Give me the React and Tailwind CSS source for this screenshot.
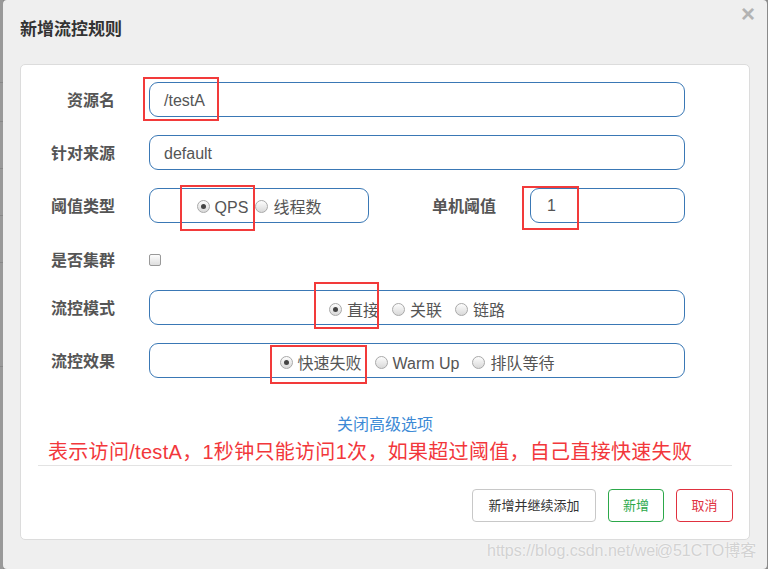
import React from "react";

const font = { fontFamily: '"Liberation Sans", "Noto Sans CJK SC", sans-serif' };

function Radio({ checked, label }) {
  return (
    <label className="flex items-center gap-[5px]">
      <span className="flex h-[13px] w-[13px] items-center justify-center rounded-full border border-[#a9a9a9] bg-gradient-to-b from-[#fdfdfd] to-[#d9d9d9]">
        {checked && <span className="h-[5px] w-[5px] rounded-full bg-[#444]" />}
      </span>
      <span className="pt-[3px] text-[16px] text-[#555]">{label}</span>
    </label>
  );
}

function Label({ children, w = "w-[94px]" }) {
  return <div className={`${w} shrink-0 pt-[3px] text-right text-[16px] font-bold text-[#555]`}>{children}</div>;
}

const box = "h-[35px] rounded-[9px] border border-[#3a78b5] bg-white";

export default function App() {
  return (
    <div className="relative flex h-[569px] w-[768px] overflow-hidden bg-[#8a8a8a]" style={font}>
      {/* backdrop strip on the left */}
      <div className="flex w-[3px] shrink-0 flex-col bg-[#999]">
        <div className="h-[83px] border-b border-[#888]" />
        <div className="h-[39px] border-b border-[#888]" />
        <div className="h-[47px] border-b border-[#888]" />
        <div className="h-[47px] border-b border-[#888]" />
        <div className="h-[47px] border-b border-[#888]" />
        <div className="h-[104px] border-b border-[#888]" />
      </div>

      {/* modal */}
      <div className="flex w-[764px] flex-col rounded-[4px] bg-[#efefef]">
        <div className="flex h-[64px] items-start justify-between pl-[17px] pr-[12px]">
          <h3 className="pt-[17px] text-[17px] font-bold text-[#333]">新增流控规则</h3>
          <span className="pt-[2px] text-[24px] font-bold leading-none text-[#b3b3b3]">×</span>
        </div>

        <div className="ml-[17px] w-[730px] rounded-[5px] border border-[#dcdcdc] bg-white">
          <div className="flex flex-col gap-[18px] pr-[64px] pt-[17px]">
            <div className="flex items-center gap-[34px]">
              <Label>资源名</Label>
              <div className={`${box} flex flex-1 items-center px-[14px] pt-[3px] text-[16px] text-[#555]`}>/testA</div>
            </div>
            <div className="flex items-center gap-[34px]">
              <Label>针对来源</Label>
              <div className={`${box} flex flex-1 items-center px-[14px] pt-[2px] text-[16px] text-[#555]`}>default</div>
            </div>
            <div className="flex items-center">
              <Label>阈值类型</Label>
              <div className={`${box} ml-[34px] flex w-[220px] items-center justify-center gap-[7px] pt-[2px]`}>
                <Radio checked label="QPS" />
                <Radio label="线程数" />
              </div>
              <Label w="w-[127px]">单机阈值</Label>
              <div className={`${box} ml-[34px] flex flex-1 items-center px-[16px] text-[16px] text-[#555]`}>1</div>
            </div>
            <div className="flex h-[31px] items-center gap-[34px] pt-[6px]">
              <Label>是否集群</Label>
              <span className="h-[12px] w-[12px] rounded-[2px] border border-[#999] bg-gradient-to-b from-[#fdfdfd] to-[#dedede]" />
            </div>
            <div className="flex items-center gap-[34px]">
              <Label>流控模式</Label>
              <div className={`${box} flex flex-1 items-center justify-center gap-[13px] pt-[4px]`}>
                <Radio checked label="直接" />
                <Radio label="关联" />
                <Radio label="链路" />
              </div>
            </div>
            <div className="flex items-center gap-[34px]">
              <Label>流控效果</Label>
              <div className={`${box} flex flex-1 items-center justify-center gap-[13px] pt-[4px]`}>
                <Radio checked label="快速失败" />
                <Radio label="Warm Up" />
                <Radio label="排队等待" />
              </div>
            </div>
          </div>

          <div className="mt-[35px] text-center text-[16px] text-[#3d8ad6]">关闭高级选项</div>
          <div className="mx-[17px] border-b border-[#e3e3e3]">
            <p className="pl-[10px] pt-[3px] text-[20px] leading-[25px] tracking-[0.3px] text-[#f2373b]">
              表示访问/testA，1秒钟只能访问1次，如果超过阈值，自己直接快速失败
            </p>
          </div>
          <div className="flex justify-end gap-[12px] pb-[17px] pr-[16px] pt-[23px]">
            <button className="h-[33px] w-[124px] rounded-[4px] border border-[#c8c8c8] bg-white text-[13px] text-[#333]">
              新增并继续添加
            </button>
            <button className="h-[33px] w-[56px] rounded-[4px] border border-[#2ca84a] bg-white text-[13px] text-[#2ca84a]">
              新增
            </button>
            <button className="h-[33px] w-[57px] rounded-[4px] border border-[#e0313f] bg-white text-[13px] text-[#e0313f]">
              取消
            </button>
          </div>
        </div>
      </div>

      {/* red annotation boxes */}
      <div className="absolute left-[143px] top-[77px] h-[44px] w-[76px] border-2 border-[#f23a3a]" />
      <div className="absolute left-[180px] top-[185px] h-[46px] w-[75px] border-2 border-[#f23a3a]" />
      <div className="absolute left-[522px] top-[186px] h-[44px] w-[57px] border-2 border-[#f23a3a]" />
      <div className="absolute left-[314px] top-[282px] h-[47px] w-[65px] border-2 border-[#f23a3a]" />
      <div className="absolute left-[270px] top-[345px] h-[39px] w-[97px] border-2 border-[#f23a3a]" />

      {/* watermark */}
      <div className="absolute left-[487px] top-[539px] flex text-[16px] text-[#d2d2d2] [text-shadow:0_0_2px_#fff]">
        <span>https://blog.csdn.net/wei</span>
        <span className="-ml-[2px]">@51CTO博客</span>
      </div>
    </div>
  );
}
